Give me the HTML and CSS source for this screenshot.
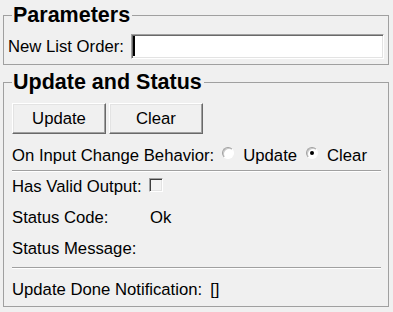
FILE: index.html
```html
<!DOCTYPE html>
<html lang="en">
<head>
    <meta charset="UTF-8">
    <meta name="viewport" content="width=device-width, initial-scale=1.0">
    <title>Parameters</title>
    <link rel="stylesheet" href="styles.css">
</head>
<body>
    <fieldset class="group group-params">
        <legend class="group-title">Parameters</legend>
        <div class="row">
            <label class="param-label" for="order">New List Order:</label>
            <div class="text-field" id="order"><span class="caret"></span></div>
        </div>
    </fieldset>

    <fieldset class="group group-status">
        <legend class="group-title">Update and Status</legend>
        <div class="buttons">
            <button class="btn" type="button">Update</button>
            <button class="btn" type="button">Clear</button>
        </div>
        <div class="row choice-row">
            <span>On Input Change Behavior:</span>
            <span class="radio first"></span>
            <span class="choice-text">Update</span>
            <span class="radio checked"><span class="dot"></span></span>
            <span class="choice-text">Clear</span>
        </div>
        <hr class="sep">
        <div class="row info-row first-info">
            <span>Has Valid Output:</span>
            <span class="checkbox"></span>
        </div>
        <div class="row info-row">
            <span class="info-label">Status Code:</span>
            <span>Ok</span>
        </div>
        <div class="row info-row">
            <span class="info-label">Status Message:</span>
            <span></span>
        </div>
        <hr class="sep sep-bottom">
        <div class="row info-row notify-row">
            <span>Update Done Notification:</span>
            <span class="notify-value">[]</span>
        </div>
    </fieldset>
</body>
</html>
```

FILE: styles.css
```css
body {
    margin: 0;
    padding: 3px 4px 0 3px;
    background: #f0f0f0;
    font-family: "Liberation Sans", Arial, sans-serif;
    font-size: 16.7px;
    line-height: 19px;
    color: #000;
}
.group {
    margin: 0;
    border: 1px solid #a0a0a0;
    min-width: 0;
}
.group-params {
    padding: 7px 4px 5px 4px;
}
.group-status {
    margin-top: 5px;
    padding: 9px 7px 7px 8px;
}
.group-title {
    font-size: 21.5px;
    font-weight: bold;
    line-height: 24px;
    padding: 0 2px 0 1px;
}
.group-params .group-title {
    margin-left: 4px;
}
.row {
    display: flex;
    align-items: flex-start;
}
.group-params .row {
    align-items: center;
}
.param-label {
    margin-right: 7px;
}
.text-field {
    flex: 1;
    height: 25px;
    box-sizing: border-box;
    background: #fff;
    border: 1px solid;
    border-color: #a0a0a0 #fff #fff #a0a0a0;
    box-shadow: inset 1px 1px 0 #696969, inset -1px -1px 0 #e3e3e3;
    padding: 1px 0 0 1px;
}
.caret {
    display: block;
    width: 2px;
    height: 20px;
    background: #000;
}
.buttons {
    display: flex;
    gap: 3px;
}
.btn {
    width: 94px;
    height: 31px;
    padding: 0;
    font: inherit;
    color: #000;
    background: #f0f0f0;
    border: 1px solid;
    border-color: #fff #696969 #696969 #fff;
    box-shadow: inset -1px -1px 0 #a0a0a0, inset 1px 1px 0 #e3e3e3;
}
.choice-row {
    margin-top: 12px;
}
.radio {
    width: 12px;
    height: 12px;
    box-sizing: border-box;
    margin: 1px 0 0 9px;
    border-radius: 50%;
    border: 1px solid;
    border-color: #a0a0a0 #fff #fff #a0a0a0;
    background: #fff;
    box-shadow: inset 1px 1px 0 #c8c8c8;
    display: flex;
    align-items: center;
    justify-content: center;
}
.radio.first {
    margin-left: 8px;
}
.dot {
    width: 4px;
    height: 4px;
    border-radius: 50%;
    background: #000;
}
.choice-text {
    margin-left: 9px;
}
.sep {
    margin: 5px 0 0;
    height: 0;
    border: 0;
    border-top: 1px solid #a0a0a0;
    border-bottom: 1px solid #fff;
}
.sep-bottom {
    margin-top: 9px;
}
.info-row {
    margin-top: 12px;
}
.info-row.first-info {
    margin-top: 5px;
}
.notify-row {
    margin-top: 11px;
}
.info-label {
    width: 138px;
}
.checkbox {
    width: 14px;
    height: 14px;
    box-sizing: border-box;
    margin: 1px 0 0 7px;
    background: #f4f4f4;
    border: 1px solid;
    border-color: #a0a0a0 #fff #fff #a0a0a0;
    box-shadow: inset 1px 1px 0 #404040, inset -1px -1px 0 #e3e3e3;
}
.notify-value {
    margin-left: 8px;
}
```
